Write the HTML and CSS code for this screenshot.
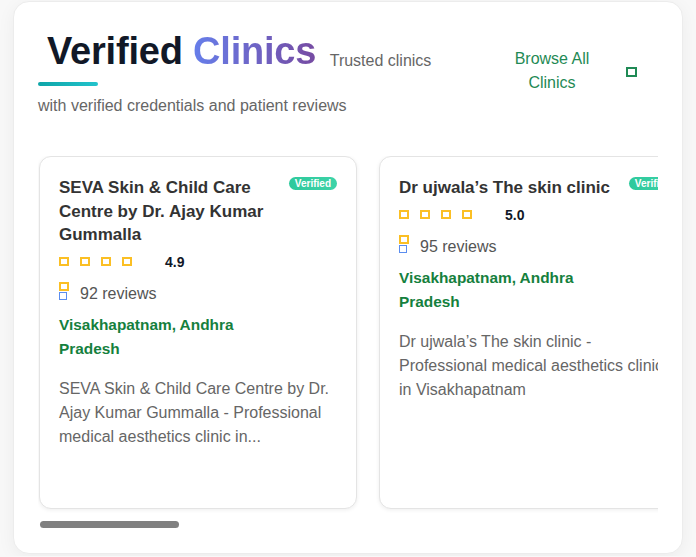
FILE: index.html
```html
<!DOCTYPE html>
<html lang="en">
<head>
<meta charset="utf-8">
<title>Verified Clinics</title>
<link rel="stylesheet" href="styles.css">
</head>
<body>
<section class="panel">
  <div class="head">
    <div class="intro">
      <h2 class="title"><span class="title-text">Verified <span class="grad">Clinics</span></span><span class="bar"></span></h2>
      <span class="sub">Trusted clinics with verified credentials and patient reviews</span>
    </div>
    <a class="browse" href="#"><span class="browse-text">Browse All Clinics</span><span class="ico-sq"></span></a>
  </div>

  <div class="scroller">
    <article class="card">
      <div class="card-top">
        <h3 class="card-name">SEVA Skin &amp; Child Care Centre by Dr. Ajay Kumar Gummalla</h3>
        <span class="badge">Verified</span>
      </div>
      <div class="rating">
        <span class="stars"><i class="star"></i><i class="star"></i><i class="star"></i><i class="star"></i></span>
        <span class="score">4.9</span>
      </div>
      <div class="reviews">
        <span class="rev-icons"><i class="star"></i><i class="chat"></i></span>
        <span>92 reviews</span>
      </div>
      <p class="loc">Visakhapatnam, Andhra Pradesh</p>
      <p class="desc">SEVA Skin &amp; Child Care Centre by Dr. Ajay Kumar Gummalla - Professional medical aesthetics clinic in...</p>
    </article>

    <article class="card">
      <div class="card-top">
        <h3 class="card-name">Dr ujwala’s The skin clinic</h3>
        <span class="badge">Verified</span>
      </div>
      <div class="rating">
        <span class="stars"><i class="star"></i><i class="star"></i><i class="star"></i><i class="star"></i></span>
        <span class="score">5.0</span>
      </div>
      <div class="reviews">
        <span class="rev-icons"><i class="star"></i><i class="chat"></i></span>
        <span>95 reviews</span>
      </div>
      <p class="loc">Visakhapatnam, Andhra Pradesh</p>
      <p class="desc">Dr ujwala’s The skin clinic - Professional medical aesthetics clinic in Visakhapatnam</p>
    </article>

    <article class="card">
      <div class="card-top">
        <h3 class="card-name">Derma Care Skin &amp; Hair Clinic</h3>
        <span class="badge">Verified</span>
      </div>
      <div class="rating">
        <span class="stars"><i class="star"></i><i class="star"></i><i class="star"></i><i class="star"></i></span>
        <span class="score">4.8</span>
      </div>
      <div class="reviews">
        <span class="rev-icons"><i class="star"></i><i class="chat"></i></span>
        <span>88 reviews</span>
      </div>
      <p class="loc">Visakhapatnam, Andhra Pradesh</p>
      <p class="desc">Derma Care Skin &amp; Hair Clinic - Professional medical aesthetics clinic in Visakhapatnam</p>
    </article>

    <article class="card">
      <div class="card-top">
        <h3 class="card-name">Kaya Skin Clinic</h3>
        <span class="badge">Verified</span>
      </div>
      <div class="rating">
        <span class="stars"><i class="star"></i><i class="star"></i><i class="star"></i><i class="star"></i></span>
        <span class="score">4.7</span>
      </div>
      <div class="reviews">
        <span class="rev-icons"><i class="star"></i><i class="chat"></i></span>
        <span>76 reviews</span>
      </div>
      <p class="loc">Visakhapatnam, Andhra Pradesh</p>
      <p class="desc">Kaya Skin Clinic - Professional medical aesthetics clinic in Visakhapatnam</p>
    </article>
  </div>
  <div class="scroll-track"><div class="scroll-thumb"></div></div>
</section>
</body>
</html>
```

FILE: styles.css
```css
* { box-sizing: border-box; }

html, body {
  margin: 0;
  background: #f8f8f8;
}

body {
  padding: 1px 13px 2px 13px;
  font-family: "Liberation Sans", Arial, Helvetica, sans-serif;
}

.panel {
  width: 670px;
  background: #ffffff;
  border: 1px solid #ececec;
  border-radius: 16px;
  box-shadow: 0 4px 18px rgba(0, 0, 0, 0.05);
  padding: 27px 24px 24px 24px;
}

/* header */
.head {
  display: flex;
  align-items: flex-start;
}

.intro {
  flex: 0 0 420px;
  font-size: 16px;
  line-height: 25.6px;
  color: #666666;
}

.title {
  display: inline-block;
  margin: 0 0 5px 0;
  font-size: 38px;
  line-height: 45.6px;
  font-weight: 700;
  letter-spacing: -0.2px;
  color: #111827;
  vertical-align: baseline;
}

.title-text {
  display: block;
  padding-left: 9px;
}

.grad {
  background: linear-gradient(90deg, #667eea 0%, #764ba2 100%);
  -webkit-background-clip: text;
  background-clip: text;
  color: transparent;
}

.bar {
  display: block;
  width: 60px;
  height: 4px;
  margin-top: 7px;
  border-radius: 2px;
  background: linear-gradient(90deg, #0ea5a8, #22c3cc);
}

.sub {
  margin-left: 9px;
  vertical-align: -2px;
}

.browse {
  display: flex;
  align-items: center;
  gap: 24px;
  margin-top: 18px;
  margin-left: 44px;
  text-decoration: none;
  color: #1f8a55;
}

.browse-text {
  width: 100px;
  text-align: center;
  font-size: 16px;
  line-height: 24px;
}

.ico-sq {
  width: 11px;
  height: 10px;
  border: 2px solid #1f8a55;
  margin-top: 1px;
}

/* cards */
.scroller {
  display: flex;
  gap: 22px;
  margin-top: 38px;
  padding: 0 1px 8px 1px;
  overflow: hidden;
}

.card {
  flex: 0 0 318px;
  min-height: 353px;
  background: #ffffff;
  border: 1px solid #e4e4e4;
  border-radius: 12px;
  box-shadow: 0 1px 4px rgba(0, 0, 0, 0.07);
  padding: 19px;
}

.card-top {
  display: flex;
  justify-content: space-between;
  align-items: flex-start;
  gap: 8px;
}

.card-name {
  margin: 0;
  font-size: 17px;
  line-height: 23.5px;
  font-weight: 700;
  color: #333333;
}

.badge {
  flex: none;
  margin-top: 1px;
  padding: 1px 6px;
  border-radius: 7px;
  background: linear-gradient(90deg, #2ec99c, #3dd3a8);
  color: #ffffff;
  font-size: 10px;
  line-height: 11px;
  font-weight: 700;
}

.rating {
  display: flex;
  align-items: center;
  height: 20px;
  margin-top: 5px;
}

.stars {
  flex: 0 0 96px;
  display: flex;
  gap: 11px;
  margin-right: 10px;
}

.star {
  display: block;
  width: 10px;
  height: 9px;
  border: 2px solid #fbbf24;
}

.score {
  font-size: 14px;
  font-weight: 700;
  color: #111827;
}

.reviews {
  display: flex;
  align-items: center;
  gap: 11px;
  height: 24px;
  margin-top: 10px;
  font-size: 16px;
  color: #555555;
}

.rev-icons {
  align-self: flex-start;
  display: flex;
  flex-direction: column;
  width: 10px;
}

.chat {
  display: block;
  width: 8px;
  height: 8px;
  margin-top: 1px;
  border: 1.5px solid #5b8def;
}

.loc {
  margin: 7.5px 0 0 0;
  max-width: 200px;
  font-size: 15.4px;
  line-height: 24px;
  font-weight: 700;
  color: #15803d;
}

.desc {
  margin: 16px 0 0 0;
  font-size: 16px;
  line-height: 24px;
  color: #666666;
}

/* scroll indicator */
.scroll-track {
  height: 12px;
  padding: 4px 2px 1px 2px;
}

.scroll-thumb {
  width: 139px;
  height: 7px;
  border-radius: 4px;
  background: #808080;
}
```
